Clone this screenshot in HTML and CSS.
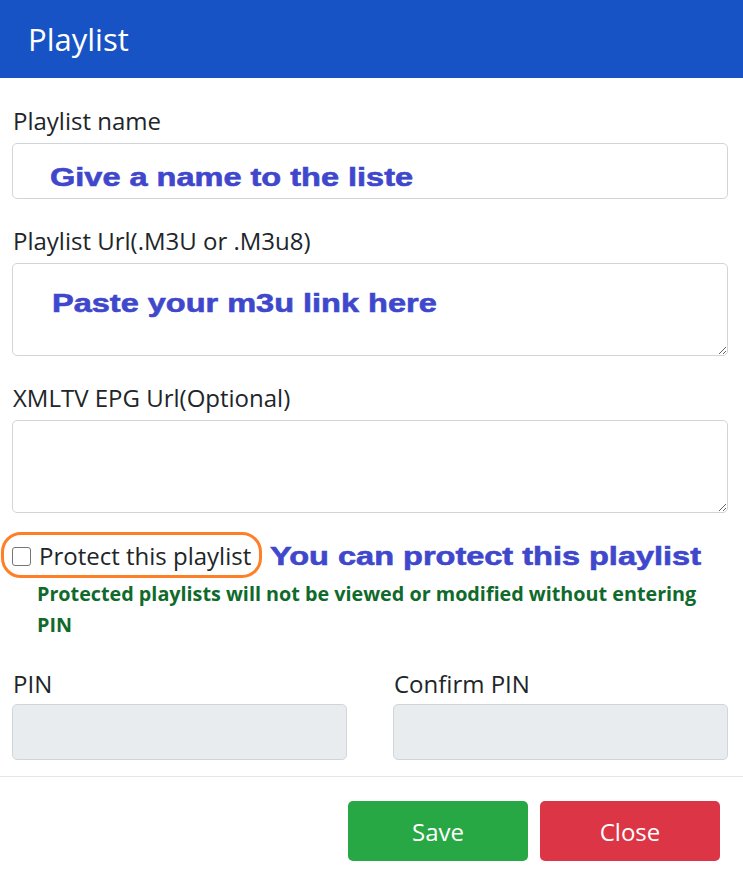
FILE: index.html
```html
<!DOCTYPE html>
<html lang="en">
<head>
<meta charset="utf-8">
<title>Playlist</title>
<link rel="stylesheet" href="styles.css">
</head>
<body>
<div class="modal">
  <div class="modal-header">
    <h5 class="modal-title">Playlist</h5>
  </div>
  <div class="modal-body">
    <div class="form-group">
      <label class="form-label">Playlist name</label>
      <div class="field">
        <input class="form-control input-name" type="text">
        <span class="note note-name">Give a name to the liste</span>
      </div>
    </div>
    <div class="form-group">
      <label class="form-label">Playlist Url(.M3U or .M3u8)</label>
      <div class="field">
        <textarea class="form-control textarea"></textarea>
        <span class="note note-url">Paste your m3u link here</span>
      </div>
    </div>
    <div class="form-group">
      <label class="form-label">XMLTV EPG Url(Optional)</label>
      <textarea class="form-control textarea"></textarea>
    </div>
    <div class="check-row">
      <span class="highlight"></span>
      <input type="checkbox" class="check" id="protect">
      <label for="protect" class="check-label">Protect this playlist</label>
      <span class="note note-protect">You can protect this playlist</span>
    </div>
    <p class="help">Protected playlists will not be viewed or modified without entering PIN</p>
    <div class="pin-row">
      <div class="pin-col">
        <label class="form-label pin-label">PIN</label>
        <input class="form-control pin-input" type="password" disabled>
      </div>
      <div class="pin-col">
        <label class="form-label pin-label">Confirm PIN</label>
        <input class="form-control pin-input" type="password" disabled>
      </div>
    </div>
  </div>
  <div class="modal-footer">
    <button class="btn btn-save">Save</button>
    <button class="btn btn-close">Close</button>
  </div>
</div>
</body>
</html>
```
FILE: styles.css
```css
html, body {
  margin: 0;
  padding: 0;
  background: #ffffff;
}
body {
  font-family: "Open Sans", "Noto Sans", "Liberation Sans", sans-serif;
  color: #212529;
}
.modal {
  width: 743px;
}
.modal-header {
  height: 78px;
  background: #1753c4;
  display: flex;
  align-items: center;
  padding-left: 28px;
  box-sizing: border-box;
}
.modal-title {
  margin: 0;
  color: #ffffff;
  font-size: 31px;
  font-weight: 400;
  line-height: 40px;
}
.modal-body {
  padding: 28px 15px 16px 12px;
  border-bottom: 1px solid #e3e6ea;
}
.form-group {
  margin-bottom: 27px;
}
.form-label {
  display: block;
  font-size: 24px;
  line-height: 30px;
  margin-bottom: 7px;
  padding-left: 1px;
}
.field {
  position: relative;
}
.form-control {
  display: block;
  width: 100%;
  box-sizing: border-box;
  border: 1px solid #d0d5da;
  border-radius: 5px;
  background: #ffffff;
  font-family: inherit;
  font-size: 20px;
  margin: 0;
  padding: 8px 14px;
}
.input-name {
  height: 56px;
}
.textarea {
  height: 93px;
  resize: vertical;
}
.note {
  position: absolute;
  font-family: "Liberation Sans", Arial, sans-serif;
  font-weight: 700;
  font-size: 25px;
  line-height: 30px;
  color: #3f48cc;
  white-space: nowrap;
  transform: scaleX(1.3);
  transform-origin: left center;
  -webkit-text-stroke: 0.6px #3f48cc;
  pointer-events: none;
}
.note-name {
  left: 38px;
  top: 19px;
}
.note-url {
  left: 40px;
  top: 25px;
}
.check-row {
  position: relative;
  display: flex;
  align-items: center;
  height: 30px;
  margin-top: 28px;
}
.highlight {
  position: absolute;
  left: -11px;
  top: -9px;
  width: 255px;
  height: 40px;
  border: 3px solid #ff7f27;
  border-radius: 20px;
}
.check {
  appearance: none;
  -webkit-appearance: none;
  box-sizing: border-box;
  width: 19px;
  height: 19px;
  margin: 0 8px 0 0;
  border: 1px solid #767676;
  border-radius: 3px;
  background: #ffffff;
  flex: none;
}
.check-label {
  font-size: 24px;
  line-height: 30px;
  color: #212529;
}
.note-protect {
  position: static;
  margin-left: 19px;
}
.help {
  margin: 7px 0 0 25px;
  font-size: 19.75px;
  line-height: 31px;
  font-weight: 700;
  color: #0f6a2b;
}
.pin-row {
  display: grid;
  grid-template-columns: 1fr 1fr;
  column-gap: 46px;
  margin-top: 29px;
}
.pin-label {
  margin-bottom: 5px;
}
.pin-input {
  height: 56px;
  background: #e9ecef;
}
.modal-footer {
  display: flex;
  justify-content: flex-end;
  gap: 12px;
  padding: 24px 23px 0 0;
}
.btn {
  width: 180px;
  height: 60px;
  border: none;
  border-radius: 5px;
  color: #ffffff;
  font-family: inherit;
  font-size: 24px;
  cursor: pointer;
}
.btn-save {
  background: #28a745;
}
.btn-close {
  background: #dc3545;
}
```
